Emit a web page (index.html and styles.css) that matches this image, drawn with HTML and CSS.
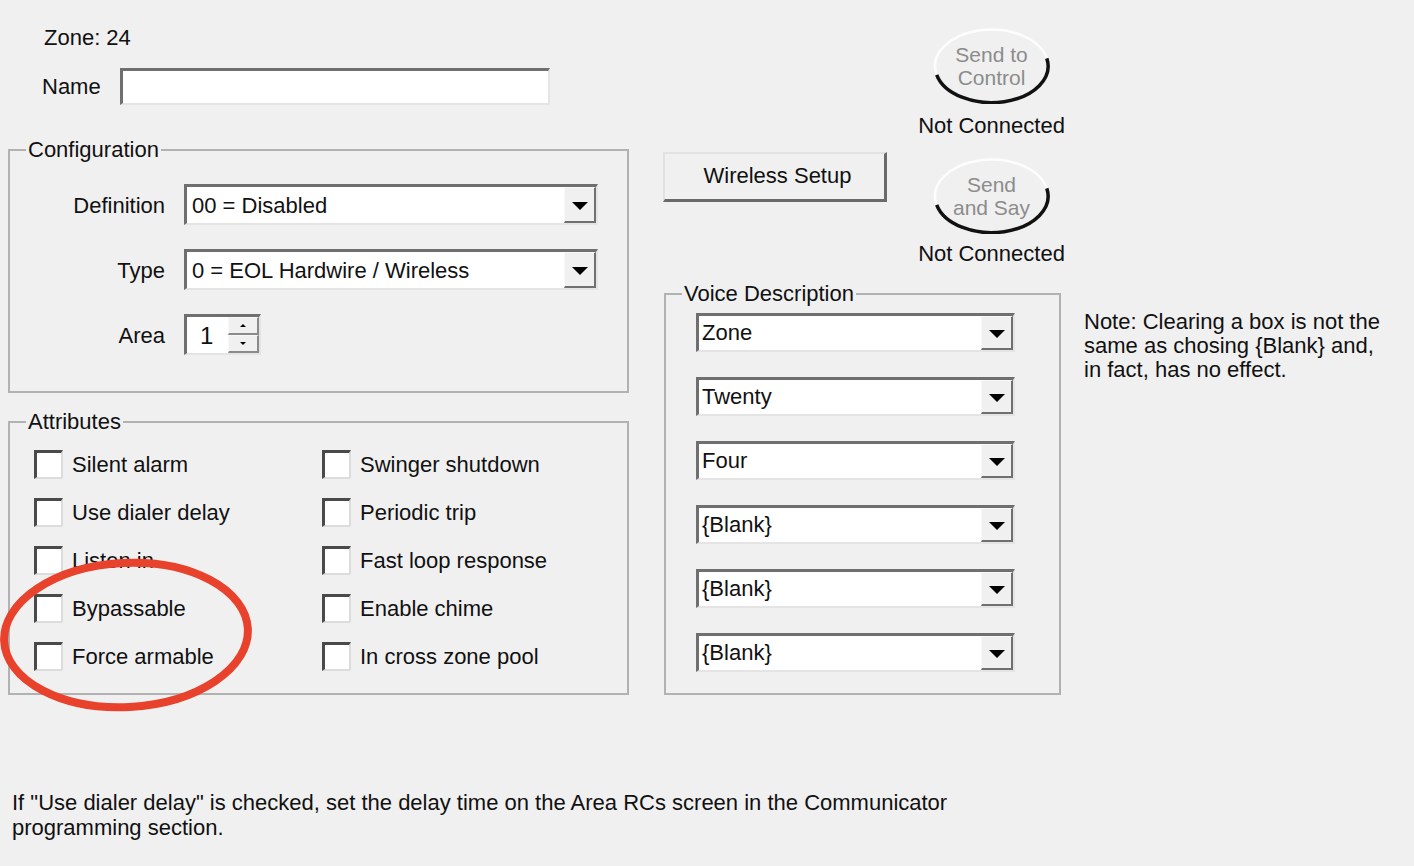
FILE: index.html
```html
<!DOCTYPE html>
<html>
<head>
<meta charset="utf-8">
<title>Zone 24</title>
<link rel="stylesheet" href="styles.css">
</head>
<body>
<div class="page">
  <div class="main">
    <div class="col-left">
      <div class="zone">Zone: 24</div>
      <div class="name-row">
        <span class="name-lbl">Name</span>
        <div class="textbox"></div>
      </div>

      <fieldset class="group config">
        <legend>Configuration</legend>
        <div class="config-grid">
          <span class="lbl-r">Definition</span>
          <div class="combo wide"><span class="val">00 = Disabled</span><span class="drop"><i></i></span></div>
          <span class="lbl-r">Type</span>
          <div class="combo wide"><span class="val">0 = EOL Hardwire / Wireless</span><span class="drop"><i></i></span></div>
          <span class="lbl-r">Area</span>
          <div class="spin"><span class="val">1</span><span class="spin-btns"><span class="sb up"><i></i></span><span class="sb down"><i></i></span></span></div>
        </div>
      </fieldset>

      <fieldset class="group attrs">
        <legend>Attributes</legend>
        <div class="attr-grid">
          <label class="chk"><span class="cb"></span><span class="cl">Silent alarm</span></label>
          <label class="chk"><span class="cb"></span><span class="cl">Swinger shutdown</span></label>
          <label class="chk"><span class="cb"></span><span class="cl">Use dialer delay</span></label>
          <label class="chk"><span class="cb"></span><span class="cl">Periodic trip</span></label>
          <label class="chk"><span class="cb"></span><span class="cl">Listen in</span></label>
          <label class="chk"><span class="cb"></span><span class="cl">Fast loop response</span></label>
          <label class="chk"><span class="cb"></span><span class="cl">Bypassable</span></label>
          <label class="chk"><span class="cb"></span><span class="cl">Enable chime</span></label>
          <label class="chk"><span class="cb"></span><span class="cl">Force armable</span></label>
          <label class="chk"><span class="cb"></span><span class="cl">In cross zone pool</span></label>
        </div>
      </fieldset>
    </div>

    <div class="col-mid">
      <div class="mid-top">
        <div class="btn">Wireless Setup</div>
        <div class="ovals">
          <div class="oval first">
            <svg class="oval-ring" width="117" height="76" viewBox="0 0 117 76" aria-hidden="true">
              <path d="M3.7,46.8 A56.5,36.5 0 1 1 113.8,30.4" fill="none" stroke="#fdfdfd" stroke-width="2.5"/>
              <path d="M113.8,30.4 A56.5,36.5 0 0 1 3.7,46.8" fill="none" stroke="#111" stroke-width="3.5"/>
            </svg>
            <span class="oval-txt">Send to<br>Control</span>
          </div>
          <div class="status s1">Not Connected</div>
          <div class="oval second">
            <svg class="oval-ring" width="117" height="76" viewBox="0 0 117 76" aria-hidden="true">
              <path d="M3.7,46.8 A56.5,36.5 0 1 1 113.8,30.4" fill="none" stroke="#fdfdfd" stroke-width="2.5"/>
              <path d="M113.8,30.4 A56.5,36.5 0 0 1 3.7,46.8" fill="none" stroke="#111" stroke-width="3.5"/>
            </svg>
            <span class="oval-txt">Send<br>and Say</span>
          </div>
          <div class="status s2">Not Connected</div>
        </div>
      </div>
      <fieldset class="group voice">
        <legend>Voice Description</legend>
        <div class="voice-list">
          <div class="combo vc"><span class="val">Zone</span><span class="drop"><i></i></span></div>
          <div class="combo vc"><span class="val">Twenty</span><span class="drop"><i></i></span></div>
          <div class="combo vc"><span class="val">Four</span><span class="drop"><i></i></span></div>
          <div class="combo vc"><span class="val">{Blank}</span><span class="drop"><i></i></span></div>
          <div class="combo vc"><span class="val">{Blank}</span><span class="drop"><i></i></span></div>
          <div class="combo vc"><span class="val">{Blank}</span><span class="drop"><i></i></span></div>
        </div>
      </fieldset>
    </div>

    <div class="col-note">Note: Clearing a box is not the same as chosing {Blank} and, in fact, has no effect.</div>
  </div>

  <p class="footnote">If "Use dialer delay" is checked, set the delay time on the Area RCs screen in the Communicator programming section.</p>

  <svg class="annot" width="260" height="164" viewBox="0 0 260 164" aria-hidden="true">
    <ellipse cx="127" cy="79" rx="122" ry="72" transform="rotate(-3 127 79)" fill="none" stroke="#e8412c" stroke-width="8"/>
  </svg>
</div>
</body>
</html>
```

FILE: styles.css
```css
html, body {
  margin: 0;
  padding: 0;
  background: #f0f0f0;
}

body {
  font-family: "Liberation Sans", Arial, sans-serif;
  font-size: 22px;
  color: #111;
}

.page {
  position: relative;
  width: 1414px;
  height: 866px;
  overflow: hidden;
}

.main {
  display: flex;
  align-items: flex-start;
  padding-left: 8px;
}

/* ---------- left column ---------- */
.col-left {
  width: 621px;
  display: flex;
  flex-direction: column;
}

.zone {
  margin-top: 25px;
  padding-left: 36px;
  line-height: 26px;
  height: 26px;
}

.name-row {
  display: flex;
  align-items: center;
  margin-top: 17px;
  height: 37px;
}

.name-lbl {
  padding-left: 34px;
  box-sizing: border-box;
  width: 112px;
}

.textbox {
  width: 430px;
  height: 37px;
  box-sizing: border-box;
  background: #fff;
  border-style: solid;
  border-width: 3px 2px 2px 3px;
  border-color: #6f6f6f #e4e4e4 #e4e4e4 #6f6f6f;
}

/* ---------- group boxes ---------- */
.group {
  margin: 0;
  padding: 0;
  min-width: 0;
  border: 2px solid #b2b2b2;
  border-radius: 0;
}

.group legend {
  margin-left: 16px;
  padding: 0 2px;
  line-height: 26px;
  height: 26px;
}

.config {
  margin-top: 32px;
}

.config-grid {
  display: grid;
  grid-template-columns: 155px auto;
  column-gap: 19px;
  grid-auto-rows: 41px;
  row-gap: 24px;
  align-items: center;
  padding: 21px 0 36px 0;
}

.lbl-r {
  text-align: right;
  padding-top: 2px;
}

.attrs {
  margin-top: 16px;
}

.attr-grid {
  display: grid;
  grid-template-columns: 288px auto;
  grid-auto-rows: 48px;
  padding: 5px 0 13px 24px;
}

.chk {
  display: flex;
  align-items: center;
  gap: 9px;
}

.cl {
  padding-top: 2px;
}

.cb {
  width: 29px;
  height: 29px;
  box-sizing: border-box;
  background: #fff;
  border-style: solid;
  border-width: 3px 2px 2px 3px;
  border-color: #4a4a4a #dcdcdc #dcdcdc #4a4a4a;
  flex: none;
}

/* ---------- combo boxes ---------- */
.combo {
  display: flex;
  align-items: stretch;
  height: 41px;
  box-sizing: border-box;
  background: #fff;
  border-style: solid;
  border-width: 3px 2px 2px 3px;
  border-color: #6f6f6f #e4e4e4 #e4e4e4 #6f6f6f;
}

.combo.wide {
  width: 414px;
}

.combo .val {
  flex: 1;
  padding-left: 5px;
  line-height: 37px;
  white-space: nowrap;
}

.combo .drop {
  width: 32px;
  flex: none;
  box-sizing: border-box;
  background: #f0f0f0;
  border-style: solid;
  border-width: 1px 2px 2px 1px;
  border-color: #f8f8f8 #707070 #707070 #f8f8f8;
  display: flex;
  align-items: center;
  justify-content: center;
}

.combo .drop i {
  width: 0;
  height: 0;
  border-left: 8px solid transparent;
  border-right: 8px solid transparent;
  border-top: 8px solid #000;
  margin-top: 2px;
}

/* ---------- spin ---------- */
.spin {
  display: flex;
  width: 77px;
  height: 41px;
  box-sizing: border-box;
  background: #fff;
  border-style: solid;
  border-width: 3px 2px 2px 3px;
  border-color: #6f6f6f #e4e4e4 #e4e4e4 #6f6f6f;
}

.spin .val {
  flex: 1;
  padding-left: 13px;
  font-size: 24px;
  line-height: 38px;
}

.spin-btns {
  width: 31px;
  display: flex;
  flex-direction: column;
}

.sb {
  flex: 1;
  background: #f0f0f0;
  box-sizing: border-box;
  border-style: solid;
  border-width: 1px 2px 2px 1px;
  border-color: #f8f8f8 #8a8a8a #8a8a8a #f8f8f8;
  display: flex;
  align-items: center;
  justify-content: center;
}

.sb.up i {
  width: 0;
  height: 0;
  border-left: 3px solid transparent;
  border-right: 3px solid transparent;
  border-bottom: 3px solid #000;
}

.sb.down i {
  width: 0;
  height: 0;
  border-left: 3px solid transparent;
  border-right: 3px solid transparent;
  border-top: 3px solid #000;
}

/* ---------- middle column ---------- */
.col-mid {
  width: 399px;
  margin-left: 34px;
  display: flex;
  flex-direction: column;
}

.mid-top {
  display: flex;
  justify-content: space-between;
  align-items: flex-start;
  height: 281px;
}

.btn {
  margin-top: 152px;
  width: 224px;
  height: 50px;
  box-sizing: border-box;
  background: #f0f0f0;
  border-style: solid;
  border-width: 2px 3px 3px 2px;
  border-color: #e2e2e2 #6a6a6a #6a6a6a #e2e2e2;
  text-align: center;
  line-height: 44px;
  padding-left: 6px;
}

.ovals {
  width: 141px;
  display: flex;
  flex-direction: column;
  align-items: center;
}

.oval {
  position: relative;
  width: 117px;
  height: 76px;
  display: flex;
  align-items: center;
  justify-content: center;
  text-align: center;
  color: #8c8c8c;
  font-size: 21px;
  line-height: 23px;
}

.oval-ring {
  position: absolute;
  left: 0;
  top: 0;
}

.oval-txt {
  position: relative;
}

.oval.first {
  margin-top: 28px;
}

.oval.second {
  margin-top: 19px;
}

.status {
  line-height: 26px;
  white-space: nowrap;
}

.status.s1 {
  margin-top: 9px;
}

.status.s2 {
  margin-top: 7px;
}

.voice {
  margin-left: 1px;
  width: 397px;
  box-sizing: border-box;
}

.voice-list {
  display: flex;
  flex-direction: column;
  gap: 25px;
  padding: 6px 0 21px 30px;
}

.combo.vc {
  width: 319px;
  height: 39px;
}

.combo.vc .val {
  padding-left: 3px;
  line-height: 33px;
}

/* ---------- note ---------- */
.col-note {
  margin-left: 22px;
  margin-top: 310px;
  width: 310px;
  line-height: 24px;
}

/* ---------- footnote ---------- */
.footnote {
  margin: 95px 0 0 12px;
  width: 980px;
  font-size: 22px;
  line-height: 25px;
}

/* ---------- annotation ---------- */
.annot {
  position: absolute;
  left: -1px;
  top: 556px;
  pointer-events: none;
}
```
